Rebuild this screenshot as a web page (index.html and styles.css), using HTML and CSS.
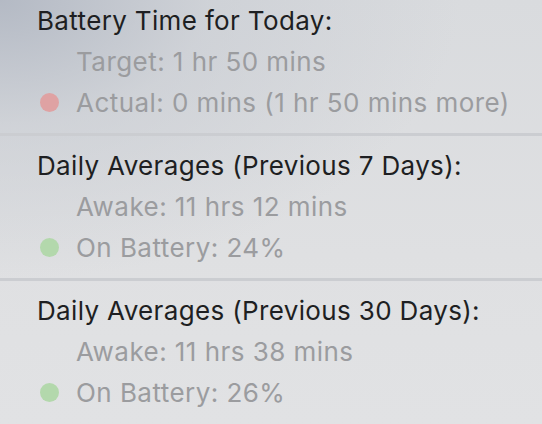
FILE: index.html
```html
<!DOCTYPE html>
<html>
<head>
<meta charset="utf-8">
<link rel="stylesheet" href="styles.css">
</head>
<body>
<div class="panel">
  <section class="group first">
    <div class="heading">Battery Time for Today:</div>
    <div class="row"><span class="slot"></span><span class="text">Target: 1 hr 50 mins</span></div>
    <div class="row"><span class="slot"><span class="dot red"></span></span><span class="text">Actual: 0 mins (1 hr 50 mins more)</span></div>
  </section>
  <section class="group">
    <div class="heading">Daily Averages (Previous 7 Days):</div>
    <div class="row"><span class="slot"></span><span class="text">Awake: 11 hrs 12 mins</span></div>
    <div class="row"><span class="slot"><span class="dot green"></span></span><span class="text">On Battery: 24%</span></div>
  </section>
  <section class="group last">
    <div class="heading">Daily Averages (Previous 30 Days):</div>
    <div class="row"><span class="slot"></span><span class="text">Awake: 11 hrs 38 mins</span></div>
    <div class="row"><span class="slot"><span class="dot green"></span></span><span class="text">On Battery: 26%</span></div>
  </section>
</div>
</body>
</html>
```
FILE: styles.css
```css
html, body {
  margin: 0;
  padding: 0;
  height: 100%;
}
body {
  background:
    radial-gradient(ellipse 460px 280px at 0 0, rgba(178,184,195,0.95) 0%, rgba(198,202,209,0.55) 45%, rgba(220,222,225,0) 100%),
    linear-gradient(180deg, #d9dbde 0%, #dfe0e2 60%, #e1e2e4 100%);
  font-family: Inter, "Liberation Sans", sans-serif;
  overflow: hidden;
}
.panel {
  display: flex;
  flex-direction: column;
}
.group {
  padding: 9px 0 10px 37px;
  border-bottom: 3px solid #cbcdd1;
}
.group.first { padding-top: 0; }
.group.last { border-bottom: none; }
.heading {
  font-size: 26px;
  line-height: 41px;
  letter-spacing: 0.35px;
  color: #1e1f22;
}
.row {
  display: flex;
  align-items: center;
  height: 41px;
}
.slot {
  width: 39px;
  display: flex;
  align-items: center;
}
.text {
  font-size: 26px;
  line-height: 41px;
  letter-spacing: 0.45px;
  color: #9b9c9f;
}
.dot {
  width: 19px;
  height: 19px;
  border-radius: 50%;
  margin-left: 3px;
}
.dot.red { background: #dfa2a3; }
.dot.green { background: #b3d8ac; }
```
